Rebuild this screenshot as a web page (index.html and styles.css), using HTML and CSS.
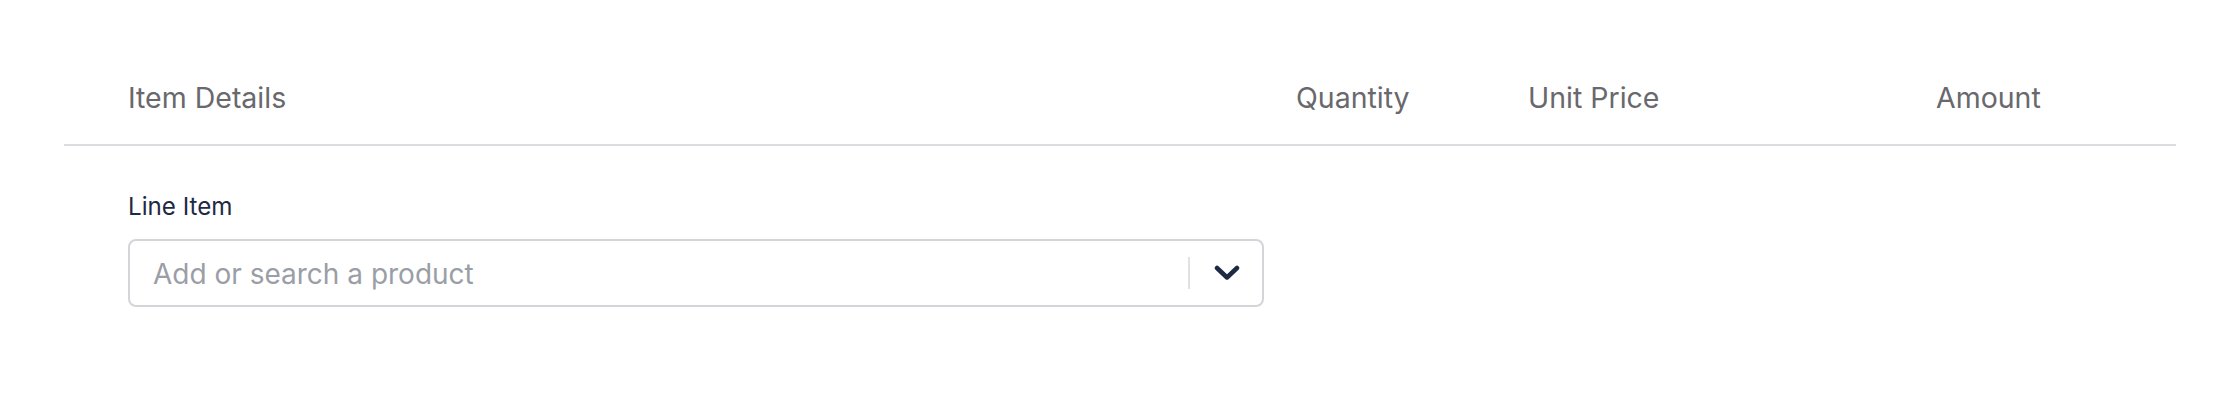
FILE: index.html
```html
<!DOCTYPE html>
<html lang="en">
<head>
<meta charset="utf-8">
<title>Line Items</title>
<link rel="stylesheet" href="styles.css">
</head>
<body>
  <div class="items-table">
    <div class="table-head">
      <div class="th th-item">Item Details</div>
      <div class="th th-qty">Quantity</div>
      <div class="th th-price">Unit Price</div>
      <div class="th th-amount">Amount</div>
    </div>
    <div class="table-body">
      <div class="line-item">
        <label class="field-label">Line Item</label>
        <div class="select-box">
          <span class="placeholder">Add or search a product</span>
          <span class="indicator-sep"></span>
          <span class="indicator">
            <svg width="26" height="16" viewBox="0 0 26 16" aria-hidden="true">
              <path d="M3 3 L13 12.5 L23 3" fill="none" stroke="#1e2a44" stroke-width="4.5" stroke-linecap="round" stroke-linejoin="round"/>
            </svg>
          </span>
        </div>
      </div>
    </div>
  </div>
</body>
</html>
```

FILE: styles.css
```css
* { box-sizing: border-box; }
html, body { margin: 0; padding: 0; background: #ffffff; }
body {
  font-family: Inter, "Noto Sans", "Liberation Sans", sans-serif;
  width: 2240px;
  height: 404px;
  overflow: hidden;
}
.items-table {
  margin: 0 64px;
}
.table-head {
  display: grid;
  grid-template-columns: 1200px 232px 408px 1fr;
  padding: 78px 0 26px;
  border-bottom: 2px solid #dcdce0;
}
.th {
  font-size: 28.5px;
  line-height: 40px;
  color: #68686d;
  font-weight: 400;
}
.th-item { padding-left: 64px; }
.th-qty { padding-left: 32px; }
.th-price { padding-left: 32px; }
.th-amount { padding-left: 32px; }
.table-body {
  padding: 45px 0 0 64px;
}
.line-item {
  width: 1136px;
}
.field-label {
  display: block;
  font-size: 24.2px;
  line-height: 32px;
  color: #1e2a44;
  margin-bottom: 16px;
}
.select-box {
  display: flex;
  align-items: center;
  height: 68px;
  border: 2px solid #d4d5d9;
  border-radius: 8px;
  padding: 0 22px 0 23px;
}
.placeholder {
  flex: 1;
  font-size: 28px;
  line-height: 34px;
  padding-top: 2px;
  color: #9a9ea6;
}
.indicator-sep {
  width: 2px;
  height: 32px;
  background: #e0e1e5;
  margin-right: 24px;
}
.indicator {
  display: flex;
  align-items: center;
}
```
